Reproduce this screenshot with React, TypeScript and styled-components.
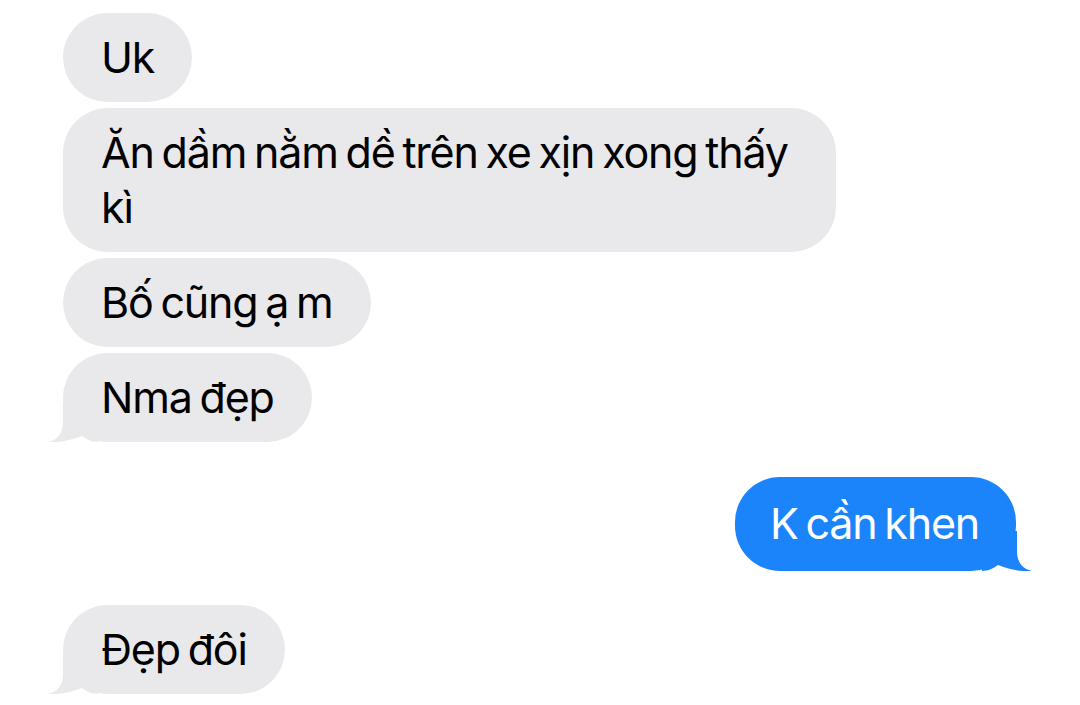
import React from "react";
import styled, { createGlobalStyle } from "styled-components";

const Global = createGlobalStyle`
  html, body { margin: 0; padding: 0; background: #ffffff; }
  body { font-family: Inter, "Noto Sans", "Liberation Sans", sans-serif; -webkit-font-smoothing: antialiased; }
`;

const Thread = styled.div`
  width: 1080px;
  height: 705px;
  box-sizing: border-box;
  padding: 13px 64px 0 63px;
  display: flex;
  flex-direction: column;
  align-items: flex-start;
  overflow: hidden;
`;

type Side = "them" | "me";

const Bubble = styled.div<{ $side: Side; $gap: number }>`
  position: relative;
  box-sizing: border-box;
  max-width: 773px;
  margin-top: ${(p) => p.$gap}px;
  align-self: ${(p) => (p.$side === "me" ? "flex-end" : "flex-start")};
  padding: ${(p) => (p.$side === "me" ? "19px 37px 20px 35px" : "17px 38px 17px 38px")};
  border-radius: 45px;
  background: ${(p) => (p.$side === "me" ? "#1b84fb" : "#e9e9eb")};
  color: ${(p) => (p.$side === "me" ? "#ffffff" : "#000000")};
  font-size: 43px;
  line-height: 55px;
  letter-spacing: -1.2px;
  word-spacing: -3px;
  font-weight: 400;
`;

const TailSvg = styled.svg<{ $side: Side }>`
  position: absolute;
  bottom: 0;
  width: 50px;
  height: 40px;
  ${(p) =>
    p.$side === "me"
      ? "right: -16px; transform: scaleX(-1);"
      : "left: -15px;"}
`;

const Tail: React.FC<{ side: Side; color: string }> = ({ side, color }) => (
  <TailSvg $side={side} viewBox="0 0 50 40" aria-hidden>
    <path
      d="M15 0 L15 20 C15 32 9 38 0 40 C11 41 24 38 34 34 C38 37 44 40 50 40 L50 0 Z"
      fill={color}
    />
  </TailSvg>
);

type Msg = { side: Side; text: string; gap: number; tail?: boolean };

const messages: Msg[] = [
  { side: "them", text: "Uk", gap: 0 },
  { side: "them", text: "Ăn dầm nằm dề trên xe xịn xong thấy kì", gap: 6 },
  { side: "them", text: "Bố cũng ạ m", gap: 6 },
  { side: "them", text: "Nma đẹp", gap: 6, tail: true },
  { side: "me", text: "K cần khen", gap: 35, tail: true },
  { side: "them", text: "Đẹp đôi", gap: 34, tail: true },
];

export default function App() {
  return (
    <>
      <Global />
      <Thread>
        {messages.map((m, i) => (
          <Bubble key={i} $side={m.side} $gap={m.gap}>
            {m.text}
            {m.tail && <Tail side={m.side} color={m.side === "me" ? "#1b84fb" : "#e9e9eb"} />}
          </Bubble>
        ))}
      </Thread>
    </>
  );
}
